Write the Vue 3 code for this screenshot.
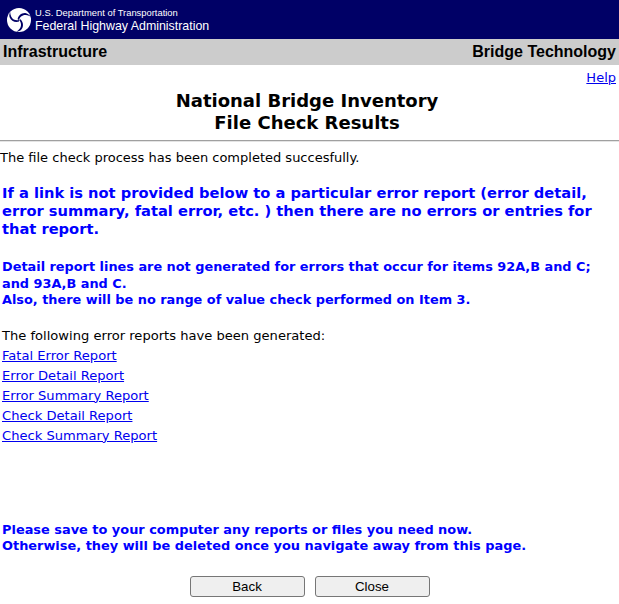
<script setup>
const links = ['Fatal Error Report', 'Error Detail Report', 'Error Summary Report', 'Check Detail Report', 'Check Summary Report']
const bladeAngles = [0, 120, 240]
</script>

<template>
  <div class="page">
    <header class="banner">
      <svg class="logo" viewBox="0 0 24 24" width="24" height="24">
        <circle cx="12" cy="12" r="12" fill="#fff" />
        <path
          v-for="angle in bladeAngles"
          :key="angle"
          d="M12 12C12.6 9.2 15.4 6.6 19 7C20.6 7.2 22 7.6 23.4 8.4C22.4 6.8 20.8 5.6 19 5.2C15 4.4 11.2 7.6 10.6 11.2Z"
          fill="#000066"
          :transform="`rotate(${angle} 12 12)`"
        />
      </svg>
      <div class="agency">
        <div class="dept">U.S. Department of Transportation</div>
        <div class="fhwa">Federal Highway Administration</div>
      </div>
    </header>
    <div class="crumb">
      <span>Infrastructure</span>
      <span>Bridge Technology</span>
    </div>
    <div class="help"><a href="#">Help</a></div>
    <h1 class="title">National Bridge Inventory<br />File Check Results</h1>
    <hr class="rule" />
    <p class="status">The file check process has been completed succesfully.</p>
    <p class="notice">If a link is not provided below to a particular error report (error detail, error summary, fatal error, etc. ) then there are no errors or entries for that report.</p>
    <p class="detail">Detail report lines are not generated for errors that occur for items 92A,B and C; and 93A,B and C.<br />Also, there will be no range of value check performed on Item 3.</p>
    <p class="lead">The following error reports have been generated:</p>
    <ul class="reports">
      <li v-for="link in links" :key="link"><a href="#">{{ link }}</a></li>
    </ul>
    <p class="save">Please save to your computer any reports or files you need now.<br />Otherwise, they will be deleted once you navigate away from this page.</p>
    <div class="actions">
      <button type="button">Back</button>
      <button type="button">Close</button>
    </div>
  </div>
</template>

<style>
html, body { margin: 0; background: #fff; }
</style>

<style scoped>
.page {
  width: 619px;
  height: 604px;
  overflow: hidden;
  font-family: "DejaVu Sans", Verdana, sans-serif;
  font-size: 13px;
  color: #000;
}
.banner {
  height: 39px;
  background: #000066;
  display: flex;
  align-items: center;
  padding-left: 7px;
  gap: 4px;
  box-sizing: border-box;
}
.logo { flex: none; }
.agency { color: #fff; font-family: "Liberation Sans", Arial, sans-serif; }
.dept { font-size: 9.4px; line-height: 13px; }
.fhwa { font-size: 12.4px; line-height: 15px; }
.crumb {
  height: 26px;
  background: #cccccc;
  display: flex;
  justify-content: space-between;
  align-items: center;
  padding: 0 3px;
  font-family: "Liberation Sans", Arial, sans-serif;
  font-weight: 700;
  font-size: 16px;
}
.help {
  text-align: right;
  padding: 5px 3px 0 0;
  font-size: 13px;
  line-height: 15px;
}
.help a, .reports a { color: #0000ee; }
.title {
  margin: 5px 0 0;
  padding-right: 5px;
  text-align: center;
  font-size: 18px;
  line-height: 22px;
  font-weight: 700;
}
.rule {
  margin: 6px 0 0;
  border: 0;
  border-top: 1px solid #a0a0a0;
  border-bottom: 1px solid #e4e4e4;
}
.status { margin: 8px 0 0; line-height: 16px; }
.notice {
  margin: 18px 0 0 2px;
  color: #0000ff;
  font-weight: 700;
  font-size: 14.67px;
  line-height: 18px;
}
.detail {
  margin: 21px 0 0 2px;
  color: #0000ff;
  font-weight: 700;
  font-size: 12.87px;
  line-height: 16.5px;
}
.lead { margin: 19px 0 0 2px; line-height: 16px; font-size: 13.08px; }
.reports { list-style: none; margin: 2px 0 0 2px; padding: 0; font-size: 13.08px; }
.reports li { height: 20px; line-height: 20px; }
.save {
  margin: 76px 0 0 2px;
  color: #0000ff;
  font-weight: 700;
  font-size: 12.92px;
  line-height: 16px;
}
.actions {
  display: flex;
  justify-content: center;
  gap: 10px;
  margin-top: 22px;
}
button {
  width: 115px;
  height: 21px;
  box-sizing: border-box;
  padding: 0;
  background: #efefef;
  border: 1px solid #767676;
  border-radius: 3px;
  font-family: "Liberation Sans", Arial, sans-serif;
  font-size: 13.3px;
  color: #000;
}
</style>
